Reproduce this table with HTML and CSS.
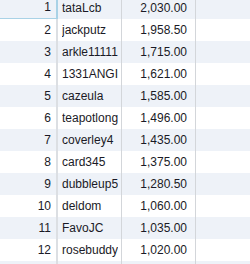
FILE: index.html
```html
<!DOCTYPE html>
<html>
<head>
<meta charset="utf-8">
<link rel="stylesheet" href="styles.css">
</head>
<body>
<div class="grid">
  <div class="row alt"><div class="c idx sel">1</div><div class="c name"><span class="txt">tataLcb</span></div><div class="c amt">2,030.00</div><div class="c fill"></div></div>
  <div class="row"><div class="c idx">2</div><div class="c name"><span class="txt">jackputz</span></div><div class="c amt">1,958.50</div><div class="c fill"></div></div>
  <div class="row alt"><div class="c idx">3</div><div class="c name"><span class="txt">arkle11111</span></div><div class="c amt">1,715.00</div><div class="c fill"></div></div>
  <div class="row"><div class="c idx">4</div><div class="c name"><span class="txt">1331ANGI</span></div><div class="c amt">1,621.00</div><div class="c fill"></div></div>
  <div class="row alt"><div class="c idx">5</div><div class="c name"><span class="txt">cazeula</span></div><div class="c amt">1,585.00</div><div class="c fill"></div></div>
  <div class="row"><div class="c idx">6</div><div class="c name"><span class="txt">teapotlong</span></div><div class="c amt">1,496.00</div><div class="c fill"></div></div>
  <div class="row alt"><div class="c idx">7</div><div class="c name"><span class="txt">coverley4</span></div><div class="c amt">1,435.00</div><div class="c fill"></div></div>
  <div class="row"><div class="c idx">8</div><div class="c name"><span class="txt">card345</span></div><div class="c amt">1,375.00</div><div class="c fill"></div></div>
  <div class="row alt"><div class="c idx">9</div><div class="c name"><span class="txt">dubbleup5</span></div><div class="c amt">1,280.50</div><div class="c fill"></div></div>
  <div class="row"><div class="c idx">10</div><div class="c name"><span class="txt">deldom</span></div><div class="c amt">1,060.00</div><div class="c fill"></div></div>
  <div class="row alt"><div class="c idx">11</div><div class="c name"><span class="txt">FavoJC</span></div><div class="c amt">1,035.00</div><div class="c fill"></div></div>
  <div class="row"><div class="c idx">12</div><div class="c name"><span class="txt">rosebuddy</span></div><div class="c amt">1,020.00</div><div class="c fill"></div></div>
  <div class="row alt"><div class="c idx"></div><div class="c name"></div><div class="c amt"></div><div class="c fill"></div></div>
</div>
</body>
</html>
```
FILE: styles.css
```css
html, body {
  margin: 0;
  padding: 0;
  background: #ffffff;
  overflow: hidden;
}
.grid {
  margin-top: -3px;
  font-family: "Liberation Sans", Arial, sans-serif;
  font-size: 12px;
  color: #1a1a26;
}
.row {
  display: grid;
  grid-template-columns: 58px 64px 74px 1fr;
  height: 22px;
  background: #ffffff;
}
.row.alt {
  background: #eef2f8;
}
.c {
  box-sizing: border-box;
  height: 22px;
  line-height: 22px;
  white-space: nowrap;
  overflow: hidden;
  border-right: 1px solid #d3d6da;
}
.idx {
  text-align: right;
  padding-right: 5px;
  border-right: 2px solid #dcdfe3;
}
.idx.sel {
  border-right: 2px solid #a9d2e6;
  border-bottom: 1px solid #a9d2e6;
  line-height: 21px;
}
.name {
  padding-left: 4px;
  padding-right: 3px;
}
.txt {
  display: block;
  overflow: hidden;
  white-space: nowrap;
}
.amt {
  text-align: right;
  padding-right: 8px;
}
.fill {
  border-right: none;
}
```
